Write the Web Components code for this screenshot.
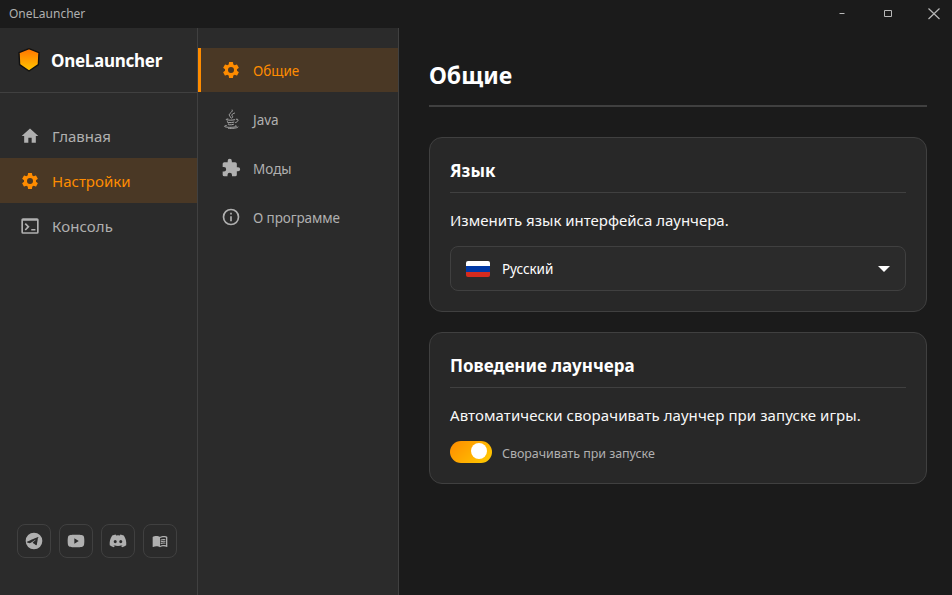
<!DOCTYPE html>
<html lang="ru">
<head>
<meta charset="utf-8">
<title>OneLauncher</title>
<style>
html,body{margin:0;height:100%;overflow:hidden;background:#1b1b1b}
body{font-family:"Noto Sans","Open Sans",sans-serif;color:#fff}
</style>
</head>
<body>
<launcher-app></launcher-app>
<script>
const make = (name, html, setup) => customElements.define(name, class extends HTMLElement {
  connectedCallback() {
    if (this.shadowRoot) return;
    const t = document.createElement('template');
    t.innerHTML = html;
    this.attachShadow({mode: 'open'}).append(t.content.cloneNode(true));
    if (setup) setup.call(this, this.shadowRoot);
  }
});

const gear = '<path d="M19.14 12.94c.04-.3.06-.61.06-.94 0-.32-.02-.64-.07-.94l2.03-1.58a.49.49 0 0 0 .12-.61l-1.92-3.32a.49.49 0 0 0-.59-.22l-2.39.96c-.5-.38-1.03-.7-1.62-.94l-.36-2.54a.48.48 0 0 0-.48-.41h-3.84a.48.48 0 0 0-.47.41l-.36 2.54c-.59.24-1.13.57-1.62.94l-2.39-.96a.48.48 0 0 0-.59.22L2.74 8.87a.48.48 0 0 0 .12.61l2.03 1.58c-.05.3-.09.63-.09.94s.02.64.07.94l-2.03 1.58a.49.49 0 0 0-.12.61l1.92 3.32c.12.22.37.29.59.22l2.39-.96c.5.38 1.03.7 1.62.94l.36 2.54c.05.24.24.41.48.41h3.84c.24 0 .44-.17.47-.41l.36-2.54c.59-.24 1.13-.56 1.62-.94l2.39.96c.22.08.47 0 .59-.22l1.92-3.32a.48.48 0 0 0-.12-.61zM12 15.6A3.6 3.6 0 1 1 12 8.4a3.6 3.6 0 0 1 0 7.2z"/>';
const icons = {
  gear,
  home: '<path d="M10 20v-6h4v6h5v-8h3L12 3 2 12h3v8z"/>',
  terminal: '<path d="M20.400 2.600H3.600a2 2 0 0 0-2 2v14.800a2 2 0 0 0 2 2h16.800a2 2 0 0 0 2-2V4.600a2 2 0 0 0-2-2zm0 17H3.600V5.800h16.800v13.800z"/><path d="M18.500 17.500h-5v-1.800h5zM7 17.500l-1.400-1.400 3-3.100-3-3.100L7 8.500l4.500 4.500z"/>',
  puzzle: '<path d="M20.500 11H19V7a2 2 0 0 0-2-2h-4V3.500a2.5 2.5 0 0 0-5 0V5H4a2 2 0 0 0-1.99 2v3.8H3.5a2.7 2.7 0 0 1 0 5.4H2V20a2 2 0 0 0 2 2h3.8v-1.5a2.7 2.7 0 0 1 5.4 0V22H17a2 2 0 0 0 2-2v-4h1.500a2.500 2.500 0 0 0 0-5z"/>',
  info: '<path d="M11 7h2v2h-2zm0 4h2v6h-2zm1-9a10 10 0 1 0 0 20 10 10 0 0 0 0-20zm0 18a8 8 0 1 1 0-16 8 8 0 0 1 0 16z"/>',
  java: '<g fill="none" stroke="currentColor" stroke-linecap="round" stroke-width="1.1"><path d="M13.5 1.200c1.500 2.700-5.300 4-3.200 7 .5.800 1.200 1.500 1.700 2.400M16.200 4.900c-3.400 1.300-3.700 2.300-2.500 3.700.700.900.300 1.700-.700 2.300"/><path d="M8.300 11.900c-2 .3-3 .8-1.200 1.200 2.700.5 6.600.4 9.200-.2M18.300 12.200c2.700-.7 3.700 2.300-.8 4.100M7.700 15c-1 .9.300 1.200 1.800 1.300 2.300.200 4.300-.1 5.900-.5M8.600 17.700c-.8.700.2 1.100 1.300 1.200 2 .200 3.600 0 5.100-.5"/><path d="M6.300 19.800c-3 .3-2.900 1.500.7 2 4.200.5 10.400 0 11.400-.9.400-.4 0-.8-.6-1M9 23.200c4.500.3 10.300-.1 11.400-1.500"/></g>',
  telegram: '<path d="M12 2a10 10 0 1 0 0 20 10 10 0 0 0 0-20zm4.640 6.800c-.15 1.580-.8 5.420-1.130 7.190-.14.750-.420 1-.680 1.030-.580.050-1.020-.380-1.580-.750-.880-.580-1.380-.940-2.230-1.500-.990-.650-.350-1.010.22-1.590.15-.15 2.710-2.480 2.760-2.690.020-.1-.050-.2-.19-.14-.120.030-1.980 1.250-5.590 3.690-.530.360-1.010.540-1.440.530-.470-.010-1.380-.270-2.060-.490-.830-.270-1.490-.42-1.430-.880.030-.24.370-.490 1.020-.740 4-1.740 6.670-2.890 8.010-3.450 3.810-1.590 4.600-1.860 5.120-1.870z"/>',
  youtube: '<path d="M21.600 7.200a2.700 2.700 0 0 0-2-2.100C17.900 4.600 12 4.600 12 4.600s-5.900 0-7.600.5a2.700 2.700 0 0 0-2 2.100C2 8.900 2 12 2 12s0 3.100.4 4.800a2.700 2.700 0 0 0 2 2c1.700.6 7.600.6 7.600.6s5.900 0 7.600-.6a2.700 2.700 0 0 0 2-2C22 15.100 22 12 22 12s0-3.100-.4-4.800zM10 15.200V8.800l5.300 3.200z"/>',
  discord: '<path d="M18.940 5.500A16.400 16.400 0 0 0 14.830 4.200c-.2.350-.4.740-.53 1.080a15.200 15.200 0 0 0-4.600 0c-.14-.34-.35-.73-.54-1.080A16.300 16.300 0 0 0 5.050 5.500C2.440 9.400 1.740 13.200 2.090 17c1.730 1.280 3.400 2.060 5.040 2.570.4-.56.770-1.150 1.080-1.770a10.700 10.700 0 0 1-1.700-.82l.41-.33a11.700 11.700 0 0 0 10.120 0l.42.33c-.54.320-1.110.6-1.700.82.300.620.670 1.210 1.070 1.770 1.650-.51 3.320-1.290 5.050-2.570.42-4.400-.690-8.200-2.940-11.500zM8.680 14.700c-.980 0-1.790-.9-1.790-2.020s.79-2.020 1.790-2.020 1.810.91 1.800 2.020c0 1.120-.8 2.020-1.800 2.020zm6.640 0c-.980 0-1.790-.9-1.790-2.020s.79-2.020 1.790-2.020 1.810.91 1.790 2.020c0 1.120-.79 2.020-1.790 2.020z"/>',
  book: '<path d="M21 5c-1.110-.35-2.330-.5-3.500-.5-1.950 0-4.050.4-5.500 1.500-1.450-1.100-3.550-1.500-5.500-1.500S2.450 4.900 1 6v14.650c0 .25.25.5.5.5.1 0 .15-.05.25-.05C3.100 20.450 5.050 20 6.500 20c1.950 0 4.050.4 5.500 1.500 1.350-.85 3.800-1.500 5.500-1.500 1.650 0 3.350.3 4.750 1.050.1.050.15.050.25.050.25 0 .5-.25.5-.5V6c-.6-.45-1.250-.75-2-1zm0 13.500c-1.100-.35-2.300-.5-3.500-.5-1.700 0-4.150.65-5.500 1.500V8c1.350-.85 3.800-1.500 5.500-1.500 1.200 0 2.400.15 3.500.5z"/><path d="M17.500 10.500c.88 0 1.730.09 2.500.26V9.240A12 12 0 0 0 17.500 9c-1.700 0-3.240.29-4.500.83v1.660c1.130-.64 2.700-.99 4.500-.99zM13 12.490v1.660c1.130-.64 2.700-.99 4.500-.99.88 0 1.730.09 2.500.26V11.900c-.79-.15-1.640-.24-2.500-.24-1.700 0-3.240.3-4.500.83zm4.500 1.840c-1.700 0-3.240.29-4.500.83v1.660c1.130-.64 2.700-.99 4.500-.99.88 0 1.730.09 2.500.26v-1.520a12 12 0 0 0-2.500-.24z"/>'
};

make('ui-icon', `<style>:host{display:block;width:var(--size,20px);height:var(--size,20px);flex:none}svg{display:block;width:100%;height:100%}</style><svg viewBox="0 0 24 24" fill="currentColor"></svg>`,
  function (r) { r.querySelector('svg').innerHTML = icons[this.getAttribute('name')]; });

make('window-bar', `<style>
:host{display:flex;height:28px;background:#1b1b1b;color:#b0b0b0;align-items:center;justify-content:space-between;box-sizing:border-box;padding-left:9px;font-size:12px;line-height:28px}
span{height:28px}
.c{display:flex}svg{display:block;width:46px;height:28px;fill:none;stroke:#b8b8b8}
svg:last-child{width:41px}</style>
<span><slot></slot></span><div class="c">
<svg viewBox="0 0 46 28"><path d="M20.500 13.500h5"/></svg>
<svg viewBox="0 0 46 28"><path d="M19.500 10.500h7v6h-7z"/></svg>
<svg viewBox="0 0 41 28"><path d="M17.500 8.500l11 10.500M28.500 8.500l-11 10.500" stroke-width="1.200"/></svg></div>`);

make('brand-header', `<style>
:host{display:flex;height:65px;box-sizing:border-box;border-bottom:1px solid #404040;align-items:center;padding:0 0 0 17px;gap:10px;font-weight:700;font-size:17px;letter-spacing:-.27px}
svg{display:block;width:24px;height:26px}</style>
<svg viewBox="0 0 24 26"><defs><linearGradient id="g" x2="0" y2="1"><stop stop-color="#ff7300"/><stop offset="1" stop-color="#ffc800"/></linearGradient></defs><path d="M12 1.600L22 5.600l-.6 12L12 24l-9.400-6.400-.6-12z" fill="url(#g)" stroke="#111" stroke-width="1.400" stroke-linejoin="round"/></svg>
<slot></slot>`);

make('nav-item', `<style>
:host{display:flex;align-items:center;height:45px;padding-left:20px;gap:12px;box-sizing:border-box;color:#b0b0b0;font-size:15px;letter-spacing:var(--ls,0)}
:host([active]){background:#4a3825;color:#ff8c00}</style><div></div><slot></slot>`,
  function (r) { r.querySelector('div').innerHTML = `<ui-icon name="${this.getAttribute('icon')}"></ui-icon>`; });

make('tab-item', `<style>
:host{display:flex;align-items:center;height:44px;padding-left:20px;gap:12px;box-sizing:border-box;color:#b0b0b0;font-size:13.500px;border-left:3px solid transparent;letter-spacing:var(--ls,0)}
:host([active]){background:#4a3825;color:#ff8c00;border-color:#ff8c00}
span{padding-top:2px}</style><div></div><span><slot></slot></span>`,
  function (r) { r.querySelector('div').innerHTML = `<ui-icon name="${this.getAttribute('icon')}"></ui-icon>`; });

make('social-link', `<style>
:host{display:grid;place-items:center;width:34px;height:34px;box-sizing:border-box;border:1px solid #404040;border-radius:8px;color:#b0b0b0}</style><div></div>`,
  function (r) { r.querySelector('div').innerHTML = `<ui-icon name="${this.getAttribute('icon')}"></ui-icon>`; });

make('side-bar', `<style>
:host{display:flex;flex-direction:column;width:198px;box-sizing:border-box;background:#2b2b2b;border-right:1px solid #404040}
nav{padding-top:20px;flex:1}
footer{display:flex;gap:8px;padding:0 17px 37px}</style>
<brand-header>OneLauncher</brand-header>
<nav><nav-item icon="home">Главная</nav-item><nav-item icon="gear" active>Настройки</nav-item><nav-item icon="terminal" style="--ls:.1px">Консоль</nav-item></nav>
<footer><social-link icon="telegram"></social-link><social-link icon="youtube"></social-link><social-link icon="discord"></social-link><social-link icon="book" style="--size:16px"></social-link></footer>`);

make('tab-panel', `<style>
:host{display:flex;flex-direction:column;gap:5px;width:201px;box-sizing:border-box;background:#2b2b2b;border-right:1px solid #404040;padding-top:20px}</style>
<tab-item icon="gear" active>Общие</tab-item><tab-item icon="java">Java</tab-item><tab-item icon="puzzle">Моды</tab-item><tab-item icon="info" style="--ls:-.1px">О программе</tab-item>`);

make('settings-card', `<style>
:host{display:block;box-sizing:border-box;border:1px solid #404040;border-radius:13px;background:#282828;padding:20px;margin-bottom:20px}
h2{margin:0;height:35px;box-sizing:border-box;border-bottom:1px solid #404040;font-size:17px;line-height:26px;font-weight:700;letter-spacing:.03px}
p{margin:15px 0 14px;font-size:15px;line-height:24px;height:24px;letter-spacing:var(--pls,0);white-space:nowrap;color:#f8f8f8}</style>
<h2><slot name="title"></slot></h2><p><slot name="text"></slot></p><slot></slot>`);

make('lang-select', `<style>
:host{display:flex;align-items:center;height:45px;box-sizing:border-box;border:1px solid #404040;border-radius:8px;background:#2b2b2b;padding:0 15px;font-size:13.500px}
.f{width:24px;height:16px;border-radius:2px;overflow:hidden;background:linear-gradient(#fff 0 5px,#0039a6 5px 11px,#d52b1e 11px)}
span{flex:1;padding-left:12px;letter-spacing:-.08px}svg{width:12px;height:6px;display:block}</style>
<div class="f"></div><span><slot></slot></span><svg viewBox="0 0 12 6"><path d="M0 0h12L6 6z" fill="#fff"/></svg>`);

make('toggle-switch', `<style>
:host{display:flex;align-items:center;height:22px;gap:10px;color:#b0b0b0;font-size:12.500px;letter-spacing:-.06px}
.t{width:42px;height:22px;border-radius:11px;box-sizing:border-box;padding:2px 5px 0 0;display:flex;justify-content:flex-end;background:linear-gradient(135deg,#ff8c00,#ffcc00)}
.t::after{content:"";width:16px;height:16px;border-radius:50%;background:#fff}
span{padding-top:3px}</style><div class="t"></div><span><slot></slot></span>`);

make('settings-page', `<style>
:host{display:block;flex:1;padding:30px 25px 0 30px;background:#1b1b1b}
h1{margin:0 0 30px;height:49px;box-sizing:border-box;border-bottom:2px solid #404040;font-size:23px;line-height:34px;font-weight:700}</style>
<h1>Общие</h1>
<settings-card><span slot="title">Язык</span><span slot="text">Изменить язык интерфейса лаунчера.</span><lang-select>Русский</lang-select></settings-card>
<settings-card style="--pls:.09px"><span slot="title">Поведение лаунчера</span><span slot="text">Автоматически сворачивать лаунчер при запуске игры.</span><toggle-switch>Сворачивать при запуске</toggle-switch></settings-card>`);

make('launcher-app', `<style>
:host{display:flex;flex-direction:column;height:100vh}main{display:flex;flex:1;min-height:0}</style>
<window-bar>OneLauncher</window-bar><main><side-bar></side-bar><tab-panel></tab-panel><settings-page></settings-page></main>`);
</script>
</body>
</html>
